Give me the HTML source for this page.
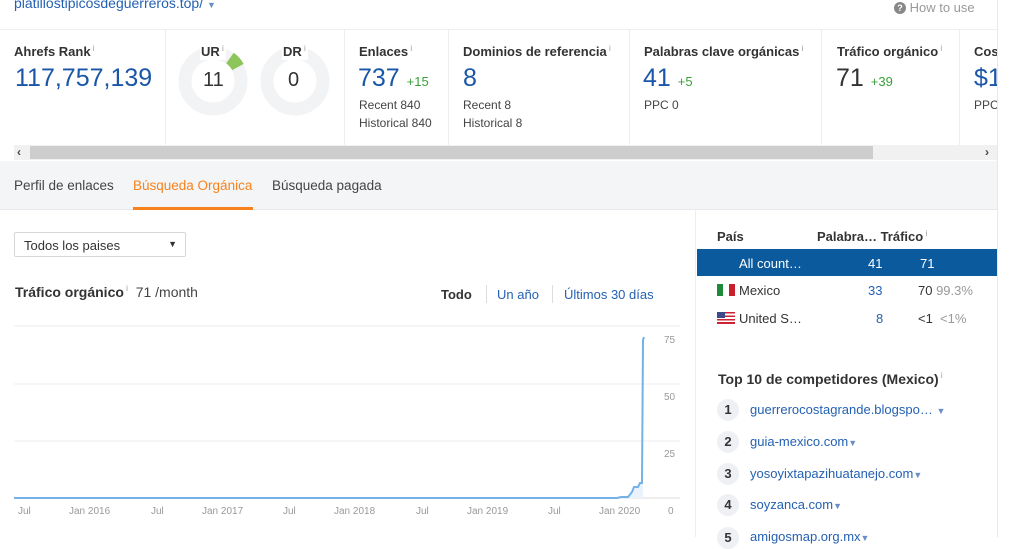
<!DOCTYPE html>
<html><head><meta charset="utf-8"><style>
*{margin:0;padding:0;box-sizing:border-box}
body{width:1024px;height:537px;overflow:hidden;background:#fff;font-family:"Liberation Sans",Arial,sans-serif;color:#333;position:relative}
.a{position:absolute;white-space:nowrap}
.lbl{font-size:13px;font-weight:bold;color:#333}
.sup{font-size:8px;color:#999;vertical-align:top;font-weight:normal}
.big{font-size:25px;color:#1a56a8}
.g{font-size:13px;color:#3aa03a}
.sm{font-size:12px;color:#444}
.vl{position:absolute;top:30px;height:115px;width:1px;background:#eceef1}
.link{color:#2461b3}
.circ{position:absolute;width:22px;height:22px;border-radius:11px;background:#eef0f4;font-size:13px;font-weight:bold;text-align:center;line-height:22px;color:#333}
</style></head><body>
<div class="a link" style="left:14px;top:-5px;font-size:14px">platillostipicosdeguerreros.top/ <span style="font-size:9px;color:#6a8fc7">▼</span></div>
<div class="a" style="left:894px;top:0px;font-size:13px;color:#999"><span style="display:inline-block;width:12px;height:12px;border-radius:6px;background:#888;color:#fff;font-size:9px;text-align:center;line-height:12px;font-weight:bold;vertical-align:1px">?</span> How to use</div>
<div class="a" style="left:0;top:29px;width:998px;height:1px;background:#eceef1"></div>
<div class="a" style="left:997px;top:0;width:1px;height:537px;background:#e6e8eb"></div>
<div class="vl" style="left:165px"></div><div class="vl" style="left:344px"></div><div class="vl" style="left:448px"></div><div class="vl" style="left:629px"></div><div class="vl" style="left:821px"></div><div class="vl" style="left:959px"></div>
<div class="a lbl" style="left:14px;top:44px">Ahrefs Rank<span class="sup"> i</span></div>
<div class="a big" style="left:15px;top:64px">117,757,139</div>
<svg class="a" style="left:178px;top:46px" width="70" height="70"><circle cx="35" cy="35" r="28" fill="none" stroke="#f2f3f5" stroke-width="13"/><path d="M52 12 A28 28 0 0 1 60 21" fill="none" stroke="#8cc65a" stroke-width="13"/><rect x="22" y="0" width="26" height="14" fill="#fff"/></svg>
<div class="a lbl" style="left:201px;top:44px">UR<span class="sup"> i</span></div>
<div class="a" style="left:203px;top:69px;font-size:20px;color:#333">11</div>
<svg class="a" style="left:260px;top:46px" width="70" height="70"><circle cx="35" cy="35" r="28" fill="none" stroke="#f2f3f5" stroke-width="13"/><rect x="22" y="0" width="26" height="14" fill="#fff"/></svg>
<div class="a lbl" style="left:283px;top:44px">DR<span class="sup"> i</span></div>
<div class="a" style="left:288px;top:69px;font-size:20px;color:#333">0</div>
<div class="a lbl" style="left:359px;top:44px">Enlaces<span class="sup"> i</span></div>
<div class="a big" style="left:358px;top:64px">737 <span class="g">+15</span></div>
<div class="a sm" style="left:359px;top:98px">Recent 840</div><div class="a sm" style="left:359px;top:116px">Historical 840</div>
<div class="a lbl" style="left:463px;top:44px">Dominios de referencia<span class="sup"> i</span></div>
<div class="a big" style="left:463px;top:64px">8</div>
<div class="a sm" style="left:463px;top:98px">Recent 8</div><div class="a sm" style="left:463px;top:116px">Historical 8</div>
<div class="a lbl" style="left:644px;top:44px">Palabras clave orgánicas<span class="sup"> i</span></div>
<div class="a big" style="left:643px;top:64px">41 <span class="g">+5</span></div>
<div class="a sm" style="left:644px;top:98px">PPC 0</div>
<div class="a lbl" style="left:837px;top:44px">Tráfico orgánico<span class="sup"> i</span></div>
<div class="a big" style="left:836px;top:64px;color:#333">71 <span class="g">+39</span></div>
<div class="a lbl" style="left:974px;top:44px;width:23px;overflow:hidden">Cost</div>
<div class="a big" style="left:974px;top:64px;width:23px;overflow:hidden">$1</div>
<div class="a sm" style="left:974px;top:98px;width:23px;overflow:hidden">PPC</div>
<div class="a" style="left:14px;top:145px;width:983px;height:15px;background:#f1f1f1"></div>
<div class="a" style="left:30px;top:146px;width:843px;height:13px;background:#cdcdcd"></div>
<div class="a" style="left:17px;top:145px;font-size:12px;color:#444;font-weight:bold">‹</div>
<div class="a" style="left:985px;top:145px;font-size:12px;color:#444;font-weight:bold">›</div>
<div class="a" style="left:0;top:161px;width:997px;height:49px;background:#f4f5f7;border-bottom:1px solid #e6e8eb"></div>
<div class="a" style="left:14px;top:178px;font-size:13.5px;color:#444">Perfil de enlaces</div>
<div class="a" style="left:133px;top:178px;font-size:13.5px;color:#f7821b">Búsqueda Orgánica</div>
<div class="a" style="left:133px;top:207px;width:120px;height:3px;background:#f7821b"></div>
<div class="a" style="left:272px;top:178px;font-size:13.5px;color:#444">Búsqueda pagada</div>
<div class="a" style="left:695px;top:210px;width:1px;height:327px;background:#eceef1"></div>
<div class="a" style="left:14px;top:232px;width:172px;height:25px;border:1px solid #d4d6da;border-radius:2px;font-size:13px;padding:5px 9px;color:#333">Todos los paises<span style="position:absolute;right:8px;top:6px;font-size:9px">▼</span></div>
<div class="a" style="left:15px;top:284px;font-size:14px;font-weight:bold">Tráfico orgánico<span class="sup"> i</span> <span style="font-weight:normal;color:#444">&nbsp;71 /month</span></div>
<div class="a" style="left:441px;top:287px;font-size:13px;font-weight:bold">Todo</div>
<div class="a" style="left:486px;top:285px;width:1px;height:18px;background:#ddd"></div>
<div class="a link" style="left:497px;top:287px;font-size:13px">Un año</div>
<div class="a" style="left:552px;top:285px;width:1px;height:18px;background:#ddd"></div>
<div class="a link" style="left:564px;top:287px;font-size:13px">Últimos 30 días</div>
<svg class="a" style="left:0;top:320px" width="690" height="200">
<g stroke="#eceef1"><line x1="14" y1="6" x2="680" y2="6"/><line x1="14" y1="64" x2="680" y2="64"/><line x1="14" y1="121" x2="680" y2="121"/><line x1="14" y1="178" x2="680" y2="178" stroke="#ddd"/></g>
<path d="M14 178 H617 L621 177 H628 L632 172 L634 167 H638 L640 163 H642 L643 30 L643 178 Z" fill="#eaf3fc"/>
<path d="M14 178 H617 L621 177 H628 L632 172 L634 167 H638 L640 163 H642 L643 20 L644 17" fill="none" stroke="#74b1e8" stroke-width="2"/>
<g font-size="10" fill="#999" font-family="Liberation Sans"><text x="664" y="23">75</text><text x="664" y="80">50</text><text x="664" y="137">25</text><text x="668" y="194">0</text>
<text x="18" y="194">Jul</text><text x="69" y="194">Jan 2016</text><text x="151" y="194">Jul</text><text x="202" y="194">Jan 2017</text><text x="283" y="194">Jul</text><text x="334" y="194">Jan 2018</text><text x="416" y="194">Jul</text><text x="467" y="194">Jan 2019</text><text x="548" y="194">Jul</text><text x="599" y="194">Jan 2020</text></g>
</svg>
<div class="a lbl" style="left:717px;top:229px">País</div>
<div class="a lbl" style="left:817px;top:229px">Palabra… Tráfico<span class="sup"> i</span></div>
<div class="a" style="left:697px;top:249px;width:300px;height:27px;background:#0c5a9e"></div>
<div class="a" style="left:739px;top:256px;font-size:13px;color:#fff">All count…</div>
<div class="a" style="left:868px;top:256px;font-size:13px;color:#fff">41</div>
<div class="a" style="left:920px;top:256px;font-size:13px;color:#fff">71</div>
<div class="a" style="left:717px;top:284px;width:18px;height:12px;background:linear-gradient(90deg,#1f8a3a 33%,#fff 33%,#fff 66%,#c8202c 66%)"></div>
<div class="a" style="left:739px;top:283px;font-size:13px">Mexico</div>
<div class="a link" style="left:868px;top:283px;font-size:13px">33</div>
<div class="a" style="left:918px;top:283px;font-size:13px">70 <span style="color:#999">99.3%</span></div>
<div class="a" style="left:717px;top:312px;width:18px;height:12px;background:repeating-linear-gradient(#c23 0 1.7px,#fff 1.7px 3.4px)"><div style="width:8px;height:6px;background:#3c4a8a"></div></div>
<div class="a" style="left:739px;top:311px;font-size:13px">United S…</div>
<div class="a link" style="left:876px;top:311px;font-size:13px">8</div>
<div class="a" style="left:918px;top:311px;font-size:13px">&lt;1 &nbsp;<span style="color:#999">&lt;1%</span></div>
<div class="a" style="left:718px;top:371px;font-size:14px;font-weight:bold">Top 10 de competidores (Mexico)<span class="sup"> i</span></div>
<div class="circ" style="left:717px;top:399px">1</div><div class="a link" style="left:750px;top:402px;font-size:13px">guerrerocostagrande.blogspo… <span style="font-size:9px;color:#6a8fc7">▼</span></div>
<div class="circ" style="left:717px;top:431px">2</div><div class="a link" style="left:750px;top:434px;font-size:13px">guia-mexico.com<span style="font-size:9px;color:#6a8fc7">▼</span></div>
<div class="circ" style="left:717px;top:463px">3</div><div class="a link" style="left:750px;top:466px;font-size:13px">yosoyixtapazihuatanejo.com<span style="font-size:9px;color:#6a8fc7">▼</span></div>
<div class="circ" style="left:717px;top:494px">4</div><div class="a link" style="left:750px;top:497px;font-size:13px">soyzanca.com<span style="font-size:9px;color:#6a8fc7">▼</span></div>
<div class="circ" style="left:717px;top:527px">5</div><div class="a link" style="left:750px;top:529px;font-size:13px">amigosmap.org.mx<span style="font-size:9px;color:#6a8fc7">▼</span></div>
</body></html>
